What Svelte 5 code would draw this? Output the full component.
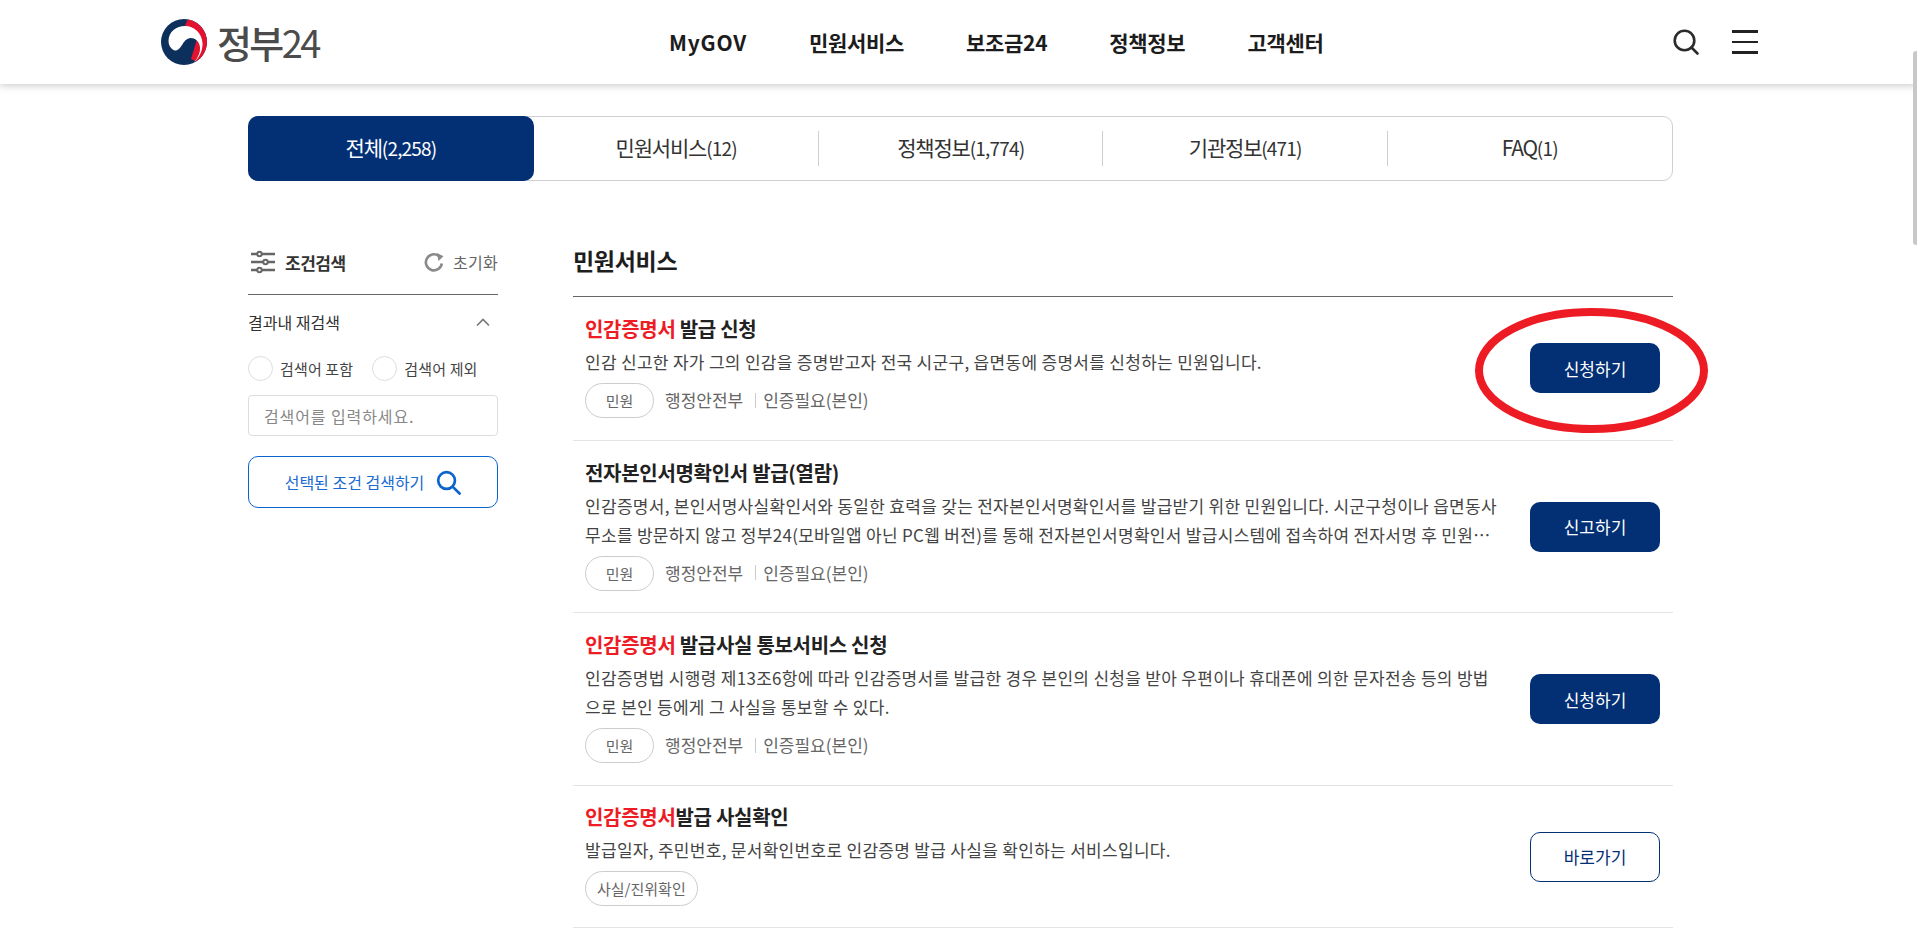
<script>
  const tabs = [
    { label: '전체', count: '(2,258)', active: true },
    { label: '민원서비스', count: '(12)' },
    { label: '정책정보', count: '(1,774)' },
    { label: '기관정보', count: '(471)' },
    { label: 'FAQ', count: '(1)' }
  ];
  const nav = ['MyGOV', '민원서비스', '보조금24', '정책정보', '고객센터'];
  const rows = [
    { hl: '인감증명서', title: ' 발급 신청', desc: '인감 신고한 자가 그의 인감을 증명받고자 전국 시군구, 읍면동에 증명서를 신청하는 민원입니다.', tag: '민원', org: '행정안전부', auth: '인증필요(본인)', btn: '신청하기', cls: 'r1' },
    { hl: '', title: '전자본인서명확인서 발급(열람)', desc: '인감증명서, 본인서명사실확인서와 동일한 효력을 갖는 전자본인서명확인서를 발급받기 위한 민원입니다. 시군구청이나 읍면동사무소를 방문하지 않고 정부24(모바일앱 아닌 PC웹 버전)를 통해 전자본인서명확인서 발급시스템에 접속하여 전자서명 후 민원…', tag: '민원', org: '행정안전부', auth: '인증필요(본인)', btn: '신고하기', cls: 'r2' },
    { hl: '인감증명서', title: ' 발급사실 통보서비스 신청', desc: '인감증명법 시행령 제13조6항에 따라 인감증명서를 발급한 경우 본인의 신청을 받아 우편이나 휴대폰에 의한 문자전송 등의 방법으로 본인 등에게 그 사실을 통보할 수 있다.', tag: '민원', org: '행정안전부', auth: '인증필요(본인)', btn: '신청하기', cls: 'r3' },
    { hl: '인감증명서', title: '발급 사실확인', desc: '발급일자, 주민번호, 문서확인번호로 인감증명 발급 사실을 확인하는 서비스입니다.', tag: '사실/진위확인', org: '', auth: '', btn: '바로가기', outline: true, cls: 'r4' }
  ];
</script>

<div class="page">
  <header class="top">
    <div class="logo">
      <svg class="mark" viewBox="0 0 46 46" width="46" height="46" aria-hidden="true">
        <circle cx="23" cy="23" r="23" fill="#0c2f5c"/>
        <path d="M27 .4A23 23 0 0 1 35 42.600L30 40L36 20L24 6z" fill="#e3122f"/>
        <path d="M7.500 22C7.500 12.500 15.500 7 24 7c9 0 17 7 17.500 17 .3 8-3.500 15-8.500 19.500 4.500-5.500 6.500-10.500 6-15.500-1-6.500-6-9.500-10.500-8.800-4.500.8-6 4.800-8.500 8.300-2 3-4.500 5-7.500 3.500-3-1.500-5-5-5-9z" fill="#fff"/>
      </svg>
      <span class="brand">정부<span class="digits">24</span></span>
    </div>
    <nav class="gnb">
      {#each nav as item, i}<span class="gnb-item" class:latin={i === 0}>{item}</span>{/each}
    </nav>
    <div class="util">
      <svg viewBox="0 0 28 28" width="28" height="28" fill="none" stroke="#2b2b2b" stroke-width="2.600" aria-hidden="true">
        <circle cx="12.500" cy="12.500" r="9.800"/><path d="M19.500 19.500l6 6" stroke-linecap="round"/>
      </svg>
      <div class="burger"><i></i><i></i><i></i></div>
    </div>
  </header>

  <main class="wrap">
    <div class="tabs">
      {#each tabs as t, i}
        <div class="tab" class:active={t.active} class:sep={i > 1}>
          <span class="tab-t">{t.label}<small>{t.count}</small></span>
        </div>
      {/each}
    </div>

    <div class="cols">
      <aside class="side">
        <div class="side-head">
          <div class="side-title">
            <svg viewBox="0 0 24 24" width="24" height="24" fill="none" stroke="#666" stroke-width="2.400" aria-hidden="true">
              <path d="M0 4h6M11 4h13M0 12h12M17 12h7M0 20h6M11 20h13"/>
              <circle cx="8.500" cy="4" r="2.200" stroke-width="2"/><circle cx="14.500" cy="12" r="2.200" stroke-width="2"/><circle cx="8.500" cy="20" r="2.200" stroke-width="2"/>
            </svg>
            <strong>조건검색</strong>
          </div>
          <div class="reset">
            <svg viewBox="0 0 20 20" width="20" height="20" fill="none" aria-hidden="true">
              <path d="M17.800 11.500A8 8 0 1 1 14.800 4" stroke="#8a8a8a" stroke-width="2.600"/>
              <path d="M13 1l6.500 3.200-5 4.800z" fill="#8a8a8a"/>
            </svg>
            <span>초기화</span>
          </div>
        </div>
        <div class="re-head">
          <span>결과내 재검색</span>
          <svg viewBox="0 0 14 9" width="14" height="9" fill="none" stroke="#777" stroke-width="1.600" aria-hidden="true"><path d="M1 7.500l6-6 6 6"/></svg>
        </div>
        <div class="radios">
          <label><i></i>검색어 포함</label>
          <label><i></i>검색어 제외</label>
        </div>
        <div class="input">검색어를 입력하세요.</div>
        <div class="go">
          <span>선택된 조건 검색하기</span>
          <svg viewBox="0 0 26 26" width="25" height="25" fill="none" stroke="#0b63ce" stroke-width="2.800" aria-hidden="true">
            <circle cx="11" cy="11" r="8.700"/><path d="M17.500 17.500l7 7" stroke-linecap="round"/>
          </svg>
        </div>
      </aside>

      <section class="list">
        <h2>민원서비스</h2>
        {#each rows as r}
          <article class="row {r.cls}">
            <div class="body">
              <h3>{#if r.hl}<em>{r.hl}</em>{/if}{r.title}</h3>
              <p>{r.desc}</p>
              <div class="meta">
                <span class="tag">{r.tag}</span>
                {#if r.org}<span class="org">{r.org}</span><span class="auth">{r.auth}</span>{/if}
              </div>
            </div>
            <div class="btn" class:outline={r.outline}>{r.btn}</div>
          </article>
        {/each}
      </section>
    </div>
  </main>

  <svg class="annot" viewBox="0 0 240 130" width="240" height="130" aria-hidden="true">
    <ellipse cx="119.500" cy="64.500" rx="112.500" ry="58.500" fill="none" stroke="#ed1c24" stroke-width="8"/>
  </svg>
  <div class="thumb"></div>
</div>

<style>
  :global(body) {
    margin: 0;
    overflow: hidden;
    background: #fff;
  }
  .page {
    position: relative;
    height: 939px;
    overflow: hidden;
    font-family: "Noto Sans CJK KR", "Noto Sans", sans-serif;
    color: #222;
  }
  .top {
    position: relative;
    height: 84px;
    display: flex;
    align-items: center;
    padding: 0 159px 0 161px;
    box-sizing: border-box;
    background: #fff;
    box-shadow: 0 1px 8px rgba(60, 60, 70, 0.3);
  }
  .logo {
    display: flex;
    align-items: center;
    gap: 10px;
    width: 508px;
    flex: none;
  }
  .mark { flex: none; }
  .brand {
    font-size: 38px;
    font-weight: 500;
    line-height: 46px;
    color: #4b4b4b;
    letter-spacing: -2.600px;
  }
  .digits { font-weight: 400; }
  .gnb {
    display: flex;
    gap: 62px;
    font-size: 21px;
    font-weight: 700;
    color: #1c1c1c;
    letter-spacing: -0.300px;
  }
  .gnb-item.latin { letter-spacing: 0.800px; }
  .util {
    margin-left: auto;
    display: flex;
    align-items: center;
    gap: 32px;
  }
  .burger {
    width: 26px;
    display: flex;
    flex-direction: column;
    gap: 8px;
  }
  .burger i {
    display: block;
    height: 2.500px;
    background: #222;
  }
  .wrap {
    margin-left: 248px;
    width: 1425px;
    padding-top: 32px;
  }
  .tabs {
    display: flex;
    height: 65px;
    box-sizing: border-box;
    border: 1px solid #cfcfcf;
    border-radius: 10px;
  }
  .tab {
    position: relative;
    flex: 1;
    display: flex;
    align-items: center;
    justify-content: center;
    box-sizing: border-box;
    padding-bottom: 3px;
    font-size: 21px;
    letter-spacing: -1.200px;
    color: #333;
  }
  .tab small { font-size: 19px; letter-spacing: -0.800px; }
  .tab.active {
    margin: -1px 0 -1px -1px;
    flex: none;
    width: 286px;
    background: #033075;
    color: #fff;
    border-radius: 10px;
  }
  .tab.sep::before {
    content: "";
    position: absolute;
    left: -1px;
    top: 14px;
    bottom: 14px;
    width: 1px;
    background: #cfcfcf;
  }
  .cols {
    display: flex;
    margin-top: 49px;
  }
  .side {
    width: 250px;
    flex: none;
  }
  .side-head {
    height: 65px;
    box-sizing: border-box;
    display: flex;
    align-items: center;
    justify-content: space-between;
    border-bottom: 1px solid #666;
  }
  .side-title {
    display: flex;
    align-items: center;
    gap: 10px;
    padding-left: 3px;
  }
  .side-title strong { font-size: 17px; letter-spacing: -0.500px; color: #333; }
  .reset {
    display: flex;
    align-items: center;
    gap: 9px;
    font-size: 16px;
    letter-spacing: 0.300px;
    color: #666;
  }
  .re-head {
    display: flex;
    align-items: center;
    justify-content: space-between;
    padding: 15px 8px 0 0;
    font-size: 16px;
    line-height: 24px;
    color: #333;
  }
  .radios {
    display: flex;
    gap: 19px;
    margin-top: 22px;
    font-size: 15px;
    letter-spacing: 0.150px;
    color: #444;
  }
  .radios label {
    display: flex;
    align-items: center;
    gap: 7px;
  }
  .radios i {
    width: 25px;
    height: 25px;
    box-sizing: border-box;
    border: 1px solid #ddd;
    border-radius: 50%;
  }
  .input {
    margin-top: 14px;
    height: 41px;
    box-sizing: border-box;
    border: 1px solid #ddd;
    border-radius: 4px;
    padding-left: 15px;
    display: flex;
    align-items: center;
    font-size: 16px;
    letter-spacing: 0.900px;
    color: #888;
  }
  .go {
    margin-top: 20px;
    height: 52px;
    box-sizing: border-box;
    border: 1px solid #0b63ce;
    border-radius: 10px;
    display: flex;
    align-items: center;
    justify-content: center;
    gap: 12px;
    font-size: 16px;
    color: #1a6bd0;
  }
  .list {
    margin-left: 75px;
    width: 1100px;
  }
  h2 {
    margin: 0;
    height: 67px;
    box-sizing: border-box;
    border-bottom: 1px solid #666;
    display: flex;
    align-items: center;
    font-size: 23px;
    font-weight: 700;
    letter-spacing: -0.300px;
    color: #1e1e1e;
    padding-bottom: 6px;
  }
  .row {
    display: flex;
    align-items: center;
    justify-content: space-between;
    box-sizing: border-box;
    border-bottom: 1px solid #e3e3e3;
    padding-left: 12px;
  }
  .r1 { height: 144px; }
  .r2 { height: 172px; }
  .r3 { height: 173px; }
  .r4 { height: 142px; }
  .body {
    width: 915px;
    padding-bottom: 5px;
  }
  h3 {
    margin: 0;
    font-size: 20px;
    line-height: 30px;
    font-weight: 700;
    letter-spacing: -0.300px;
    color: #222;
  }
  h3 em {
    font-style: normal;
    color: #ee1c25;
  }
  p {
    margin: 3px 0 0;
    font-size: 17px;
    line-height: 29px;
    color: #444;
    letter-spacing: 0.300px;
    word-break: break-all;
  }
  .meta {
    display: flex;
    align-items: center;
    margin-top: 7px;
    font-size: 17px;
    color: #666;
  }
  .tag {
    height: 35px;
    min-width: 69px;
    box-sizing: border-box;
    padding: 0 11px;
    border: 1px solid #ccc;
    border-radius: 18px;
    display: flex;
    align-items: center;
    justify-content: center;
    font-size: 15px;
    color: #666;
  }
  .org {
    margin: -2px 0 0 11px;
  }
  .auth {
    position: relative;
    margin: -2px 0 0 12px;
    padding-left: 8px;
  }
  .auth::before {
    content: "";
    position: absolute;
    left: 0;
    top: calc(50% - 7px);
    height: 15px;
    width: 1px;
    background: #ccc;
  }
  .btn {
    width: 130px;
    height: 50px;
    margin-right: 13px;
    flex: none;
    box-sizing: border-box;
    border-radius: 10px;
    background: #033075;
    color: #fff;
    display: flex;
    align-items: center;
    justify-content: center;
    font-size: 17px;
  }
  .r1 .btn { margin-bottom: 1px; }
  .btn.outline {
    background: #fff;
    color: #033075;
    border: 1px solid #033075;
  }
  .annot {
    position: absolute;
    left: 1472px;
    top: 306px;
  }
  .thumb {
    position: absolute;
    right: 0;
    top: 51px;
    width: 4px;
    height: 194px;
    background: #c8c8c8;
    border-radius: 3px 0 0 3px;
  }
</style>
